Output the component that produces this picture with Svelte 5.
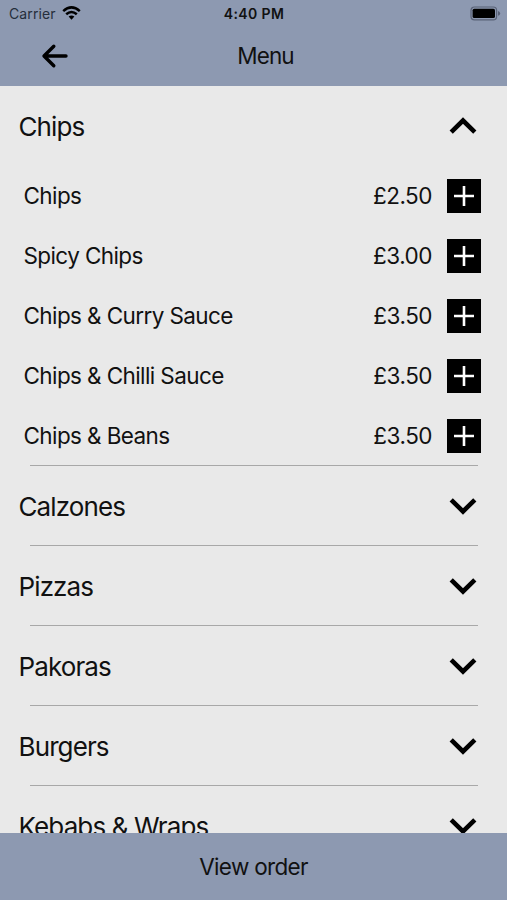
<script>
  let sections = $state([
    {
      name: 'Chips',
      open: true,
      items: [
        { name: 'Chips', price: 2.5 },
        { name: 'Spicy Chips', price: 3 },
        { name: 'Chips & Curry Sauce', price: 3.5 },
        { name: 'Chips & Chilli Sauce', price: 3.5 },
        { name: 'Chips & Beans', price: 3.5 }
      ]
    },
    { name: 'Calzones', open: false, items: [] },
    { name: 'Pizzas', open: false, items: [] },
    { name: 'Pakoras', open: false, items: [] },
    { name: 'Burgers', open: false, items: [] },
    { name: 'Kebabs & Wraps', open: false, items: [] }
  ]);
</script>

<div class="screen">
  <header>
    <div class="status">
      <div class="carrier">
        <span>Carrier</span>
        <svg class="wifi" width="19" height="15" viewBox="0 0 19 15">
          <path d="M1.2 5.1 Q9.5 -2.3 17.8 5.1" />
          <path d="M4.2 8.3 Q9.5 3.6 14.8 8.3" />
          <path class="dot" d="M6.6 10.6 Q9.5 8.2 12.4 10.6 L9.5 13.8 Z" />
        </svg>
      </div>
      <div class="time">4:40 PM</div>
      <svg class="battery" width="31" height="15" viewBox="0 0 31 15">
        <rect class="shell" x="1" y="1" width="25.6" height="12.8" rx="3.4" />
        <rect x="2.6" y="2.7" width="22.4" height="9.4" rx="1.6" />
        <path class="cap" d="M28 5 Q30.2 5.8 30.2 7.4 T28 9.8 Z" />
      </svg>
    </div>
    <nav>
      <button class="back" aria-label="Back">
        <svg width="28" height="26" viewBox="0 0 28 26">
          <path d="M12.8 3.2 L3 13 L12.8 22.8 M3.2 13 H25" />
        </svg>
      </button>
      <h1>Menu</h1>
    </nav>
  </header>

  <main>
    {#each sections as section}
      <section>
        <button class="heading" onclick={() => (section.open = !section.open)}>
          <span>{section.name}</span>
          <svg class="chevron" class:open={section.open} width="28" height="18" viewBox="0 0 28 18">
            <path d="M2.2 2.8 L14 14.4 L25.8 2.8" />
          </svg>
        </button>
        {#if section.open}
          {#each section.items as item}
            <div class="item">
              <span class="name">{item.name}</span>
              <span class="price">£{item.price.toFixed(2)}</span>
              <button class="add" aria-label="Add {item.name}">
                <svg width="20" height="20" viewBox="0 0 20 20">
                  <path d="M10 0 V20 M0 10 H20" />
                </svg>
              </button>
            </div>
          {/each}
        {/if}
      </section>
    {/each}
  </main>

  <button class="order">View order</button>
</div>

<style>
  :global(body) {
    margin: 0;
  }

  .screen {
    display: flex;
    flex-direction: column;
    height: 100vh;
    overflow: hidden;
    background: #e9e9e9;
    color: #111;
    font-family: Inter, 'Liberation Sans', sans-serif;
  }

  button {
    padding: 0;
    border: 0;
    background: none;
    color: inherit;
    font: inherit;
    cursor: pointer;
  }

  svg {
    display: block;
  }

  header {
    flex: none;
    height: 86px;
    background: #8d99b1;
  }

  .status {
    display: grid;
    grid-template-columns: 1fr auto 1fr;
    align-items: center;
    height: 27px;
    padding: 0 6px 0 9px;
  }

  .carrier {
    display: flex;
    align-items: center;
    gap: 6px;
    color: #252e3b;
    font-size: 14px;
    letter-spacing: 0.1px;
  }

  .wifi path {
    fill: none;
    stroke: #000;
    stroke-width: 2.5;
  }

  .wifi .dot {
    fill: #000;
    stroke: none;
  }

  .time {
    margin-right: 2px;
    font-size: 14px;
    font-weight: 600;
    letter-spacing: 0.4px;
  }

  .battery {
    justify-self: end;
  }

  .battery .shell {
    fill: none;
    stroke: #596277;
    stroke-width: 1.2;
  }

  .battery .cap {
    fill: #596277;
  }

  nav {
    display: grid;
    grid-template-columns: 1fr auto 1fr;
    align-items: center;
    height: 58px;
    padding: 0 17px 0 41px;
  }

  nav h1 {
    margin: -2px 0 0;
    font-size: 22.5px;
    font-weight: 400;
    letter-spacing: -0.9px;
  }

  .back {
    justify-self: start;
  }

  .back path {
    fill: none;
    stroke: #000;
    stroke-width: 3.4;
    stroke-linecap: round;
    stroke-linejoin: round;
  }

  main {
    flex: 1;
    min-height: 0;
    overflow: hidden;
  }

  .heading {
    display: flex;
    justify-content: space-between;
    align-items: center;
    width: 100%;
    height: 80px;
    padding: 0 30.5px 0 18.5px;
    font-size: 26px;
    letter-spacing: -0.88px;
  }

  .chevron path {
    fill: none;
    stroke: #000;
    stroke-width: 4.6;
  }

  .chevron.open {
    transform: rotate(180deg);
  }

  /* inset hairline between sections */
  section + section::before {
    content: '';
    display: block;
    height: 1px;
    margin: -1px 29px 0 30px;
    background: #a8a8a8;
  }

  .item {
    display: flex;
    align-items: center;
    height: 60px;
    padding: 0 26px 0 23.5px;
    font-size: 22.5px;
    letter-spacing: -0.6px;
  }

  .name,
  .price {
    padding-bottom: 2px;
  }

  .name {
    flex: 1;
  }

  .price {
    letter-spacing: -0.5px;
  }

  .add {
    display: grid;
    place-items: center;
    width: 34px;
    height: 34px;
    margin-left: 15px;
    background: #000;
  }

  .add path {
    stroke: #fff;
    stroke-width: 2.6;
  }

  .order {
    flex: none;
    height: 67px;
    background: #8d99b1;
    font-size: 22.5px;
    letter-spacing: -0.7px;
  }
</style>
